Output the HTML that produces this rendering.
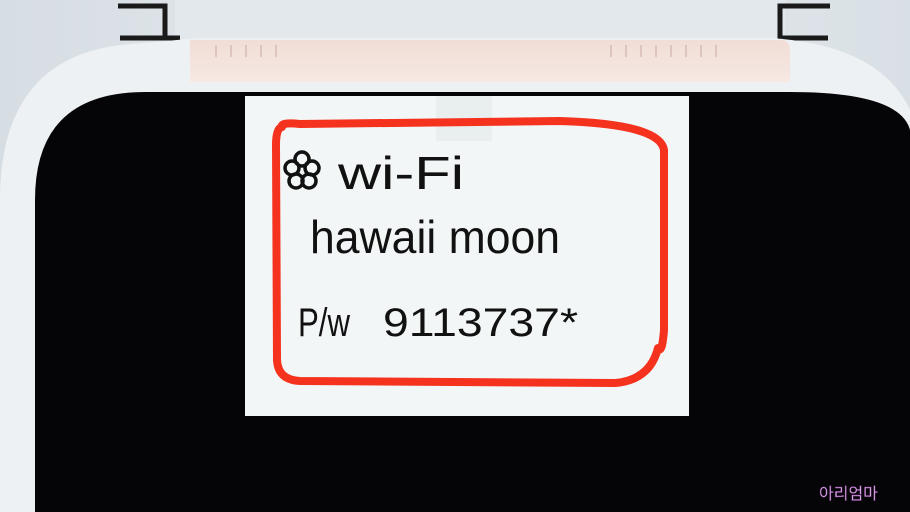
<!DOCTYPE html>
<html><head><meta charset="utf-8"><style>
html,body{margin:0;padding:0;width:910px;height:512px;overflow:hidden;background:#dde4e9}
</style></head><body>
<svg width="910" height="512" viewBox="0 0 910 512" xmlns="http://www.w3.org/2000/svg">
<defs>
<linearGradient id="bg" x1="0" y1="0" x2="1" y2="0"><stop offset="0" stop-color="#d6dde3"/><stop offset="0.5" stop-color="#e6ebee"/><stop offset="1" stop-color="#d9e0e5"/></linearGradient>
<linearGradient id="pk" x1="0" y1="0" x2="0" y2="1"><stop offset="0" stop-color="#f1ddd6"/><stop offset="1" stop-color="#f6e8e3"/></linearGradient>
</defs>
<rect width="910" height="512" fill="url(#bg)"/>
<!-- top grille area -->
<rect x="175" y="0" width="610" height="45" fill="#e3e8ec"/>
<g fill="#c9d2da">
<rect x="200" y="12" width="500" height="22" fill="none"/>
</g>
<!-- clips -->
<path d="M118 6 H165 V38 H120 M165 38 H180" stroke="#1a1a1a" stroke-width="5" fill="none"/>
<path d="M830 6 H780 V38 H828" stroke="#1a1a1a" stroke-width="5" fill="none"/>
<!-- device body -->
<path d="M0 512 V200 Q0 60 120 45 L200 38 H770 Q880 45 910 110 V512 Z" fill="#eef1f3"/>
<path d="M190 40 H780 Q790 40 790 50 V82 H190 Z" fill="url(#pk)"/>
<g fill="#d6b9b6" opacity="0.7">
<rect x="215" y="45" width="2" height="12"/><rect x="230" y="45" width="2" height="12"/><rect x="245" y="45" width="2" height="12"/><rect x="260" y="45" width="2" height="12"/><rect x="275" y="45" width="2" height="12"/>
<rect x="610" y="45" width="2" height="12"/><rect x="625" y="45" width="2" height="12"/><rect x="640" y="45" width="2" height="12"/><rect x="655" y="45" width="2" height="12"/><rect x="670" y="45" width="2" height="12"/><rect x="685" y="45" width="2" height="12"/><rect x="700" y="45" width="2" height="12"/><rect x="715" y="45" width="2" height="12"/>
</g>
<!-- black screen -->
<path d="M35 512 V200 Q35 92 145 92 H790 Q900 92 910 130 V512 Z" fill="#050507"/>
<!-- paper -->
<rect x="245" y="96" width="444" height="320" fill="#f3f6f6"/>
<rect x="436" y="96" width="56" height="45" fill="#e9eeee"/>
<!-- red border -->
<path d="M282 127 Q280 122 300 124 L560 121 Q660 124 664 150 L664 330 Q662 355 658 348 Q650 380 615 383 L300 381 Q278 380 277 360 L276 145 Q276 128 282 127 Z" fill="none" stroke="#f5321e" stroke-width="8" stroke-linejoin="round"/>
<!-- flower -->
<g fill="none" stroke="#111" stroke-width="3.5">
<circle cx="302" cy="159" r="7"/><circle cx="292" cy="168" r="7"/><circle cx="312" cy="168" r="7"/><circle cx="296" cy="181" r="7"/><circle cx="309" cy="181" r="7"/>
</g>
<g font-family="Liberation Sans, sans-serif" fill="#111" font-size="46">
<text x="338" y="189" textLength="126" lengthAdjust="spacingAndGlyphs">wi-Fi</text>
<text x="310" y="253" textLength="250" lengthAdjust="spacingAndGlyphs">hawaii moon</text>
<text x="298" y="336" font-size="40" textLength="52" lengthAdjust="spacingAndGlyphs">P/w</text>
<text x="383" y="336" font-size="40" textLength="195" lengthAdjust="spacingAndGlyphs">9113737*</text>
</g>
<!-- watermark -->
<text x="819" y="499" font-family="Liberation Sans, 'Noto Sans CJK KR', sans-serif" font-size="16" fill="#d8b7e0" stroke="#7a2a8a" stroke-width="0.4">아리엄마</text>
</svg>
</body></html>
